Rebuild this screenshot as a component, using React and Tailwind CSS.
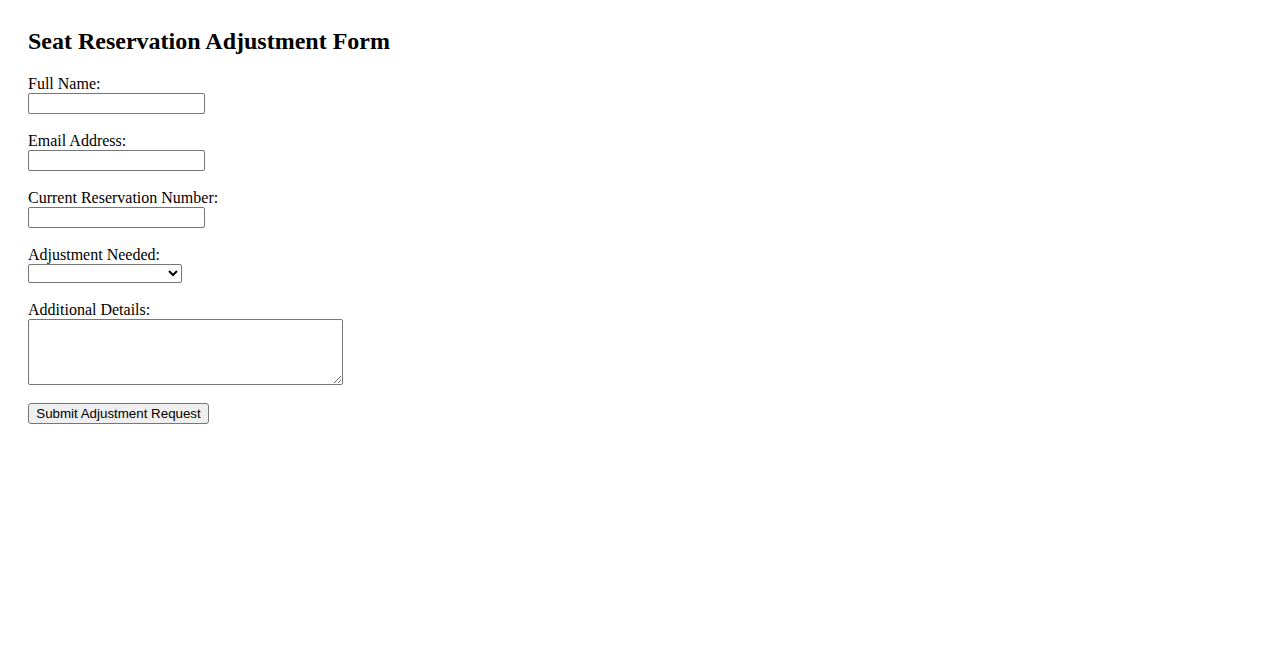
export default function App() {
  const fields = [
    { label: "Full Name:", type: "text" },
    { label: "Email Address:", type: "email" },
    { label: "Current Reservation Number:", type: "text" },
  ];

  return (
    <div className="min-h-screen bg-white pt-[27px] pl-[28px] text-black font-['Liberation_Serif',serif] text-[16px]">
      <h2 className="text-[24px] font-bold leading-[28px] mb-[20px]">Seat Reservation Adjustment Form</h2>

      <form className="flex flex-col items-start" onSubmit={(e) => e.preventDefault()}>
        {fields.map((f) => (
          <div key={f.label} className="flex flex-col items-start mb-[18px]">
            <label className="leading-[18px]">{f.label}</label>
            <input
              type={f.type}
              className="w-[177px] h-[21px] border border-[#767676] rounded-[2px] bg-white px-[2px] text-[13.333px] font-['Liberation_Sans',sans-serif] outline-none"
            />
          </div>
        ))}

        <div className="flex flex-col items-start mb-[18px]">
          <label className="leading-[18px]">Adjustment Needed:</label>
          <select className="w-[154px] h-[19px] border border-[#767676] rounded-[2px] bg-white text-[13.333px] font-['Liberation_Sans',sans-serif] outline-none">
            <option value=""></option>
            <option>Change Seat</option>
            <option>Change Date</option>
            <option>Cancel Reservation</option>
          </select>
        </div>

        <div className="flex flex-col items-start mb-[18px]">
          <label className="leading-[18px]">Additional Details:</label>
          <textarea className="w-[315px] h-[66px] border border-[#767676] rounded-[2px] bg-white p-[2px] text-[13.333px] font-['Liberation_Mono',monospace] outline-none" />
        </div>

        <button
          type="submit"
          className="w-[181px] h-[21px] border border-[#767676] rounded-[3px] bg-[#efefef] text-[13.333px] leading-[15px] font-['Liberation_Sans',sans-serif]"
        >
          Submit Adjustment Request
        </button>
      </form>
    </div>
  );
}
